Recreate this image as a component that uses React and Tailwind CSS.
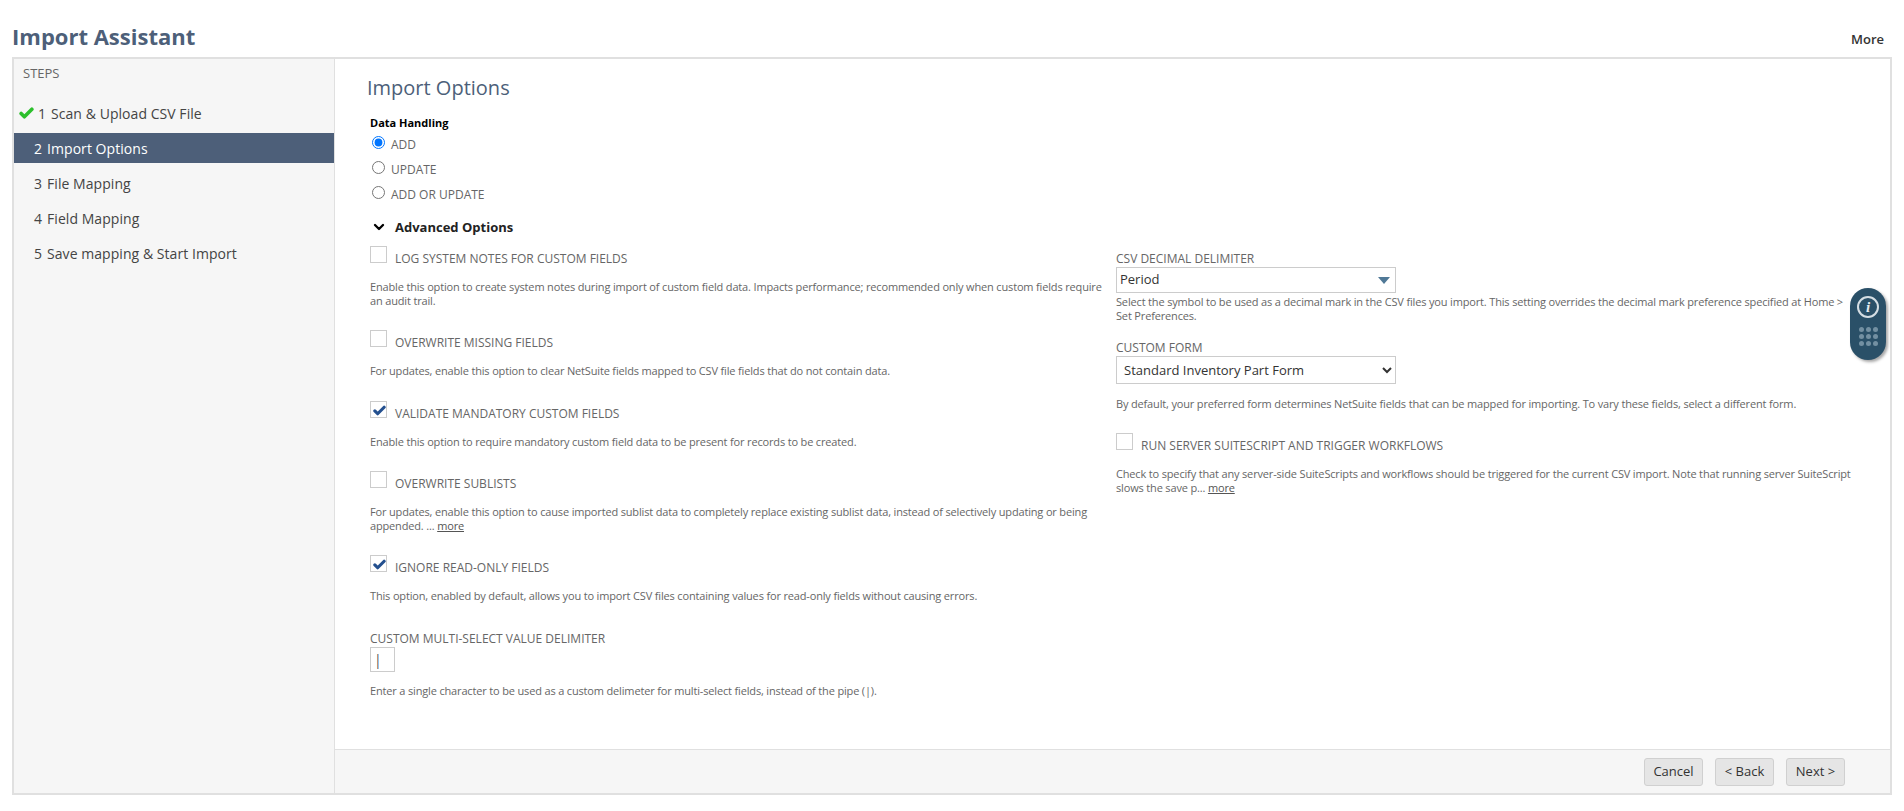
import { ChevronDown } from 'lucide-react';

const STEPS = [
  { n: 1, label: 'Scan & Upload CSV File', done: true },
  { n: 2, label: 'Import Options', active: true },
  { n: 3, label: 'File Mapping' },
  { n: 4, label: 'Field Mapping' },
  { n: 5, label: 'Save mapping & Start Import' },
];

const RADIOS = ['ADD', 'UPDATE', 'ADD OR UPDATE'];

function Check({ className }) {
  return (
    <svg viewBox="0 0 14 11" className={className} fill="none" stroke="currentColor" strokeWidth="3.4" strokeLinecap="round" strokeLinejoin="round">
      <path d="M2 6 L5 9 L12 2" />
    </svg>
  );
}

function Field({ label, checked, className = '', children }) {
  return (
    <div className={className}>
      <div className="flex items-start">
        <div className="w-[17px] h-[17px] border border-[#cccccc] bg-white flex items-center justify-center shrink-0">
          {checked && <Check className="w-[13px] h-[11px] text-[#24508f] mt-[1px] ml-[2px]" />}
        </div>
        <div className="ml-[8px] mt-[5px] text-[12px] leading-[16px] text-[#666666]">{children[0]}</div>
      </div>
      <p className="mt-[13px] text-[11px] leading-[14px] tracking-[-0.16px] text-[#666666]">{children[1]}</p>
    </div>
  );
}

function More() {
  return <span className="underline text-[#555555]">more</span>;
}

export default function App() {
  return (
    <div className="h-[811px] flex flex-col bg-white pl-[12px] pr-[12px] pb-[16px] font-['Open_Sans',sans-serif] relative">
      <div className="h-[57px] shrink-0 flex items-end justify-between pb-[6px]">
        <h1 className="text-[22px] leading-[30px] font-bold text-[#4d5f79]">Import Assistant</h1>
        <span className="text-[13px] leading-[18px] font-semibold text-[#333333] mr-[8px] mb-[3px]">More</span>
      </div>

      <div className="flex-1 flex border-2 border-[#e0e0e0] min-h-0">
        <aside className="w-[321px] shrink-0 bg-[#f6f6f6] border-r border-[#e0e0e0]">
          <div className="pl-[9px] pt-[5px] text-[13px] leading-[18px] text-[#666666]">STEPS</div>
          <div className="mt-[16px]">
            {STEPS.map(s => (
              <div
                key={s.n}
                className={`h-[30px] mb-[5px] flex items-center text-[14px] tracking-[0.05px] ${s.active ? 'bg-[#4d5f79] text-white' : 'text-[#444444]'} ${s.done ? 'pl-[5px]' : 'pl-[20px]'}`}
              >
                {s.done && <Check className="w-[15px] h-[12px] mr-[4px] text-[#2cc02c]" />}
                <span className="mr-[5px]">{s.n}</span>
                {s.label}
              </div>
            ))}
          </div>
        </aside>

        <main className="flex-1 flex flex-col min-w-0">
          <div className="flex-1 pl-[32px] pt-[15px]">
            <h2 className="text-[20px] leading-[28px] text-[#4d5f79]">Import Options</h2>
            <div className="pl-[3px] mt-[13px]">
              <div className="text-[11px] leading-[16px] font-bold text-black">Data Handling</div>
              <div className="mt-[3px]">
                {RADIOS.map((r, i) => (
                  <label key={r} className="h-[25px] flex items-start text-[12px] text-[#666666]">
                    <input type="radio" name="handling" defaultChecked={i === 0} className="w-[13px] h-[13px] mt-[2px] ml-[2px] mr-[6px]" />
                    <span className="leading-[16px] mt-[3px]">{r}</span>
                  </label>
                ))}
              </div>
              <div className="flex items-center mt-[9px] text-[13px] leading-[18px] font-bold text-[#222222]">
                <ChevronDown size={16} strokeWidth={3.5} className="ml-[1px] mr-[8px] text-black" />
                Advanced Options
              </div>

              <div className="flex mt-[10px]">
                <div className="w-[746px] shrink-0 pr-[12px]">
                  <Field>
                    {['LOG SYSTEM NOTES FOR CUSTOM FIELDS', 'Enable this option to create system notes during import of custom field data. Impacts performance; recommended only when custom fields require an audit trail.']}
                  </Field>
                  <Field className="mt-[22px]">
                    {['OVERWRITE MISSING FIELDS', 'For updates, enable this option to clear NetSuite fields mapped to CSV file fields that do not contain data.']}
                  </Field>
                  <Field className="mt-[23px]" checked>
                    {['VALIDATE MANDATORY CUSTOM FIELDS', 'Enable this option to require mandatory custom field data to be present for records to be created.']}
                  </Field>
                  <Field className="mt-[22px]">
                    {['OVERWRITE SUBLISTS', <>For updates, enable this option to cause imported sublist data to completely replace existing sublist data, instead of selectively updating or being appended. ... <More /></>]}
                  </Field>
                  <Field className="mt-[22px]" checked>
                    {['IGNORE READ-ONLY FIELDS', 'This option, enabled by default, allows you to import CSV files containing values for read-only fields without causing errors.']}
                  </Field>
                  <div className="mt-[28px] text-[12px] leading-[16px] text-[#666666]">CUSTOM MULTI-SELECT VALUE DELIMITER</div>
                  <div className="w-[25px] h-[25px] border border-[#cccccc] flex items-center pl-[3px] text-[14px] text-[#555555]">|</div>
                  <p className="mt-[12px] text-[11px] leading-[14px] tracking-[-0.16px] text-[#666666]">Enter a single character to be used as a custom delimeter for multi-select fields, instead of the pipe (|).</p>
                </div>

                <div className="flex-1 pr-[29px] pt-[5px]">
                  <div className="text-[12px] leading-[16px] text-[#666666]">CSV DECIMAL DELIMITER</div>
                  <div className="w-[280px] h-[26px] border border-[#cccccc] flex items-center justify-between pl-[3px] pr-[5px] text-[13px] text-[#333333]">
                    Period
                    <svg width="12" height="7" viewBox="0 0 12 7"><path d="M0 0H12L6 7Z" fill="#507997" /></svg>
                  </div>
                  <p className="mt-[2px] text-[11px] leading-[14px] tracking-[-0.16px] text-[#666666]">Select the symbol to be used as a decimal mark in the CSV files you import. This setting overrides the decimal mark preference specified at Home &gt; Set Preferences.</p>
                  <div className="mt-[17px] text-[12px] leading-[16px] text-[#666666]">CUSTOM FORM</div>
                  <select className="block w-[280px] h-[28px] border border-[#cccccc] bg-white pl-[3px] text-[13px] text-[#333333]">
                    <option>Standard Inventory Part Form</option>
                  </select>
                  <p className="mt-[13px] text-[11px] leading-[14px] tracking-[-0.16px] text-[#666666]">By default, your preferred form determines NetSuite fields that can be mapped for importing. To vary these fields, select a different form.</p>
                  <Field className="mt-[22px]">
                    {['RUN SERVER SUITESCRIPT AND TRIGGER WORKFLOWS', <>Check to specify that any server-side SuiteScripts and workflows should be triggered for the current CSV import. Note that running server SuiteScript slows the save p... <More /></>]}
                  </Field>
                </div>
              </div>
            </div>
          </div>

          <div className="h-[44px] shrink-0 bg-[#f6f6f6] border-t border-[#e0e0e0] flex items-center justify-end gap-[12px] pr-[45px]">
            {['Cancel', '< Back', 'Next >'].map(b => (
              <button key={b} className="w-[59px] h-[28px] rounded-[3px] border border-[#d0d0d0] bg-[#e5e5e5] text-[13px] text-[#333333]">{b}</button>
            ))}
          </div>
        </main>
      </div>

      <div className="absolute left-[1850px] top-[288px] w-[36px] h-[72px] rounded-full bg-[#2a5068] shadow-[2px_2px_3px_rgba(0,0,0,0.35)] flex flex-col items-center pt-[8px]">
        <div className="w-[22px] h-[22px] rounded-full border-2 border-[#d5dee4] flex items-center justify-center font-['Liberation_Serif',serif] italic font-bold text-[15px] leading-none text-[#e6ecf0]">i</div>
        <div className="mt-[9px] grid grid-cols-3 gap-[2px]">
          {Array.from({ length: 9 }, (_, i) => (
            <span key={i} className="w-[5px] h-[5px] rounded-full bg-[#7390a2]" />
          ))}
        </div>
      </div>
    </div>
  );
}
